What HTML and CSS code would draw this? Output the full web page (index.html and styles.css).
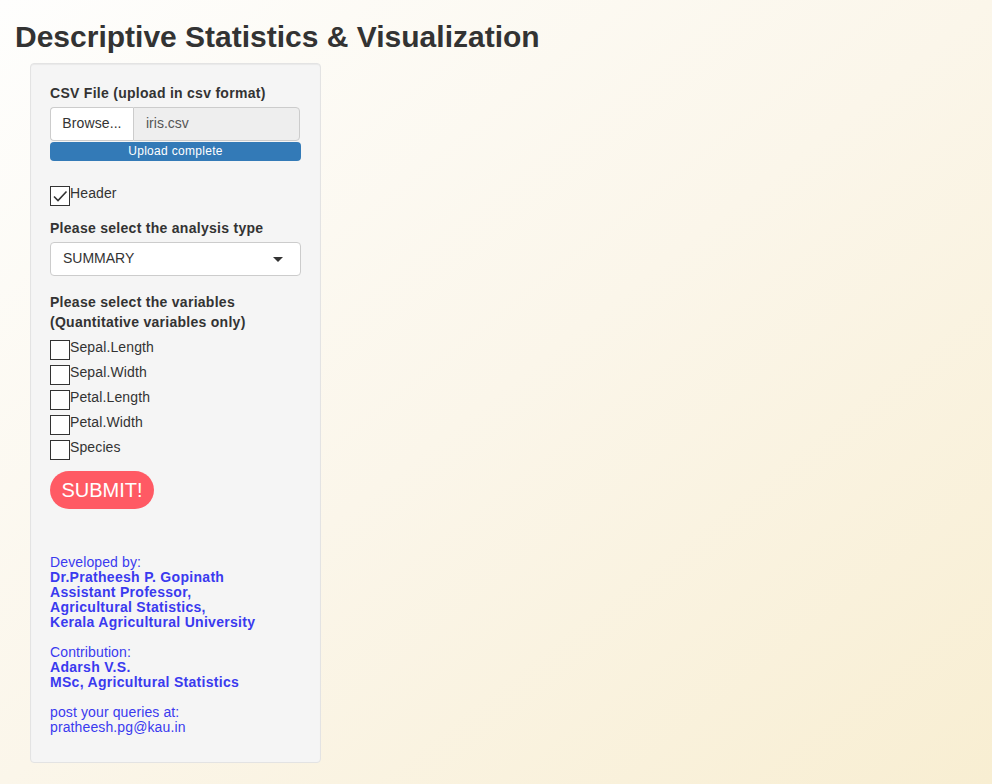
FILE: index.html
```html
<!DOCTYPE html>
<html>
<head>
<meta charset="utf-8">
<link rel="stylesheet" href="styles.css">
</head>
<body>
<div class="container">
  <h2 class="title">Descriptive Statistics &amp; Visualization</h2>
  <div class="sidebar">
    <div class="well">
      <div class="form-group">
        <label class="control-label">CSV File (upload in csv format)</label>
        <div class="input-group">
          <span class="btn-browse">Browse...</span>
          <span class="file-name">iris.csv</span>
        </div>
        <div class="progress">Upload complete</div>
      </div>

      <div class="checkbox-row header-row">
        <span class="box checked"><svg width="16" height="16" viewBox="0 0 16 16"><path d="M2 8.5 L6 12.5 L14.5 3.5" fill="none" stroke="#333" stroke-width="1.6"/></svg></span>
        <span class="cb-label">Header</span>
      </div>

      <div class="form-group">
        <label class="control-label">Please select the analysis type</label>
        <div class="select">
          <span>SUMMARY</span>
          <span class="caret"></span>
        </div>
      </div>

      <div class="form-group vars">
        <label class="control-label">Please select the variables<br>(Quantitative variables only)</label>
        <div class="checkbox-list">
          <div class="checkbox-row"><span class="box"></span><span class="cb-label">Sepal.Length</span></div>
          <div class="checkbox-row"><span class="box"></span><span class="cb-label">Sepal.Width</span></div>
          <div class="checkbox-row"><span class="box"></span><span class="cb-label">Petal.Length</span></div>
          <div class="checkbox-row"><span class="box"></span><span class="cb-label">Petal.Width</span></div>
          <div class="checkbox-row"><span class="box"></span><span class="cb-label">Species</span></div>
        </div>
      </div>

      <button class="submit">SUBMIT!</button>

      <div class="credits">
        <p>Developed by:<br>
        <b>Dr.Pratheesh P. Gopinath<br>Assistant Professor,<br>Agricultural Statistics,<br>Kerala Agricultural University</b></p>
        <p>Contribution:<br>
        <b>Adarsh V.S.<br>MSc, Agricultural Statistics</b></p>
        <p>post your queries at:<br>pratheesh.pg@kau.in</p>
      </div>
    </div>
  </div>
</div>
</body>
</html>
```

FILE: styles.css
```css
html, body {
  margin: 0;
  padding: 0;
  height: 100%;
}
body {
  font-family: "Liberation Sans", Arial, sans-serif;
  font-size: 14px;
  line-height: 1.42857;
  color: #333;
  background: linear-gradient(to bottom right, #fefefd 0%, #fbf6ea 50%, #f8eed2 100%);
  background-attachment: fixed;
}
.container {
  padding: 0 15px;
}
.title {
  margin: 20px 0 10px 0;
  font-size: 30px;
  font-weight: bold;
  line-height: 33px;
  color: #333;
}
.sidebar {
  width: 291px;
  padding-left: 15px;
}
.well {
  background: #f5f5f5;
  border: 1px solid #e3e3e3;
  border-radius: 4px;
  padding: 19px 19px 10px 19px;
  box-shadow: inset 0 1px 1px rgba(0,0,0,0.05);
  box-sizing: border-box;
  height: 700px;
}
.form-group {
  margin-bottom: 15px;
}
.control-label {
  display: block;
  font-weight: bold;
  margin-bottom: 4px;
  line-height: 20px;
  letter-spacing: 0.28px;
}
.input-group {
  display: flex;
  height: 34px;
  box-sizing: border-box;
  width: 250px;
}
.btn-browse {
  display: flex;
  align-items: center;
  justify-content: center;
  width: 83px;
  box-sizing: border-box;
  background: #fff;
  border: 1px solid #ccc;
  border-right: none;
  border-radius: 4px 0 0 4px;
  color: #333;
  letter-spacing: 0.1px;
}
.file-name {
  flex: 1;
  display: flex;
  align-items: center;
  padding-left: 12px;
  background: #eee;
  border: 1px solid #ccc;
  border-radius: 0 4px 4px 0;
  color: #555;
}
.progress {
  margin-top: 1px;
  height: 19px;
  background: #337ab7;
  border-radius: 4px;
  color: #fff;
  font-size: 12px;
  line-height: 19px;
  text-align: center;
  width: 251px;
  letter-spacing: 0.3px;
}
.checkbox-row {
  display: flex;
  align-items: flex-start;
  height: 25px;
}
.header-row {
  margin-top: 25px;
  margin-bottom: 7px;
}
.box {
  width: 20px;
  height: 20px;
  box-sizing: border-box;
  border: 1.5px solid #333;
  background: #fff;
  flex: none;
  display: flex;
  align-items: center;
  justify-content: center;
}
.cb-label {
  line-height: 20px;
  margin-top: -3px;
  letter-spacing: 0.12px;
}
.select {
  display: flex;
  align-items: center;
  justify-content: space-between;
  height: 34px;
  box-sizing: border-box;
  width: 251px;
  background: #fff;
  border: 1px solid #ccc;
  border-radius: 4px;
  padding: 0 17px 0 12px;
  color: #333;
}
.caret {
  width: 0;
  height: 0;
  border-left: 5px solid transparent;
  border-right: 5px solid transparent;
  border-top: 5px solid #333;
}
.vars {
  margin-top: 16px;
  margin-bottom: 6px;
}
.vars .control-label {
  margin-bottom: 8px;
}
.submit {
  display: block;
  font-family: "Liberation Sans", Arial, sans-serif;
  font-size: 20px;
  color: #fff;
  background: #ff5a64;
  border: none;
  border-radius: 19px;
  height: 38px;
  width: 104px;
  padding: 0;
}
.credits {
  margin-top: 46px;
  color: #3a3aef;
  line-height: 15px;
  letter-spacing: 0.12px;
}
.credits b {
  letter-spacing: 0.3px;
}
.credits p {
  margin: 0 0 15px 0;
}
```
